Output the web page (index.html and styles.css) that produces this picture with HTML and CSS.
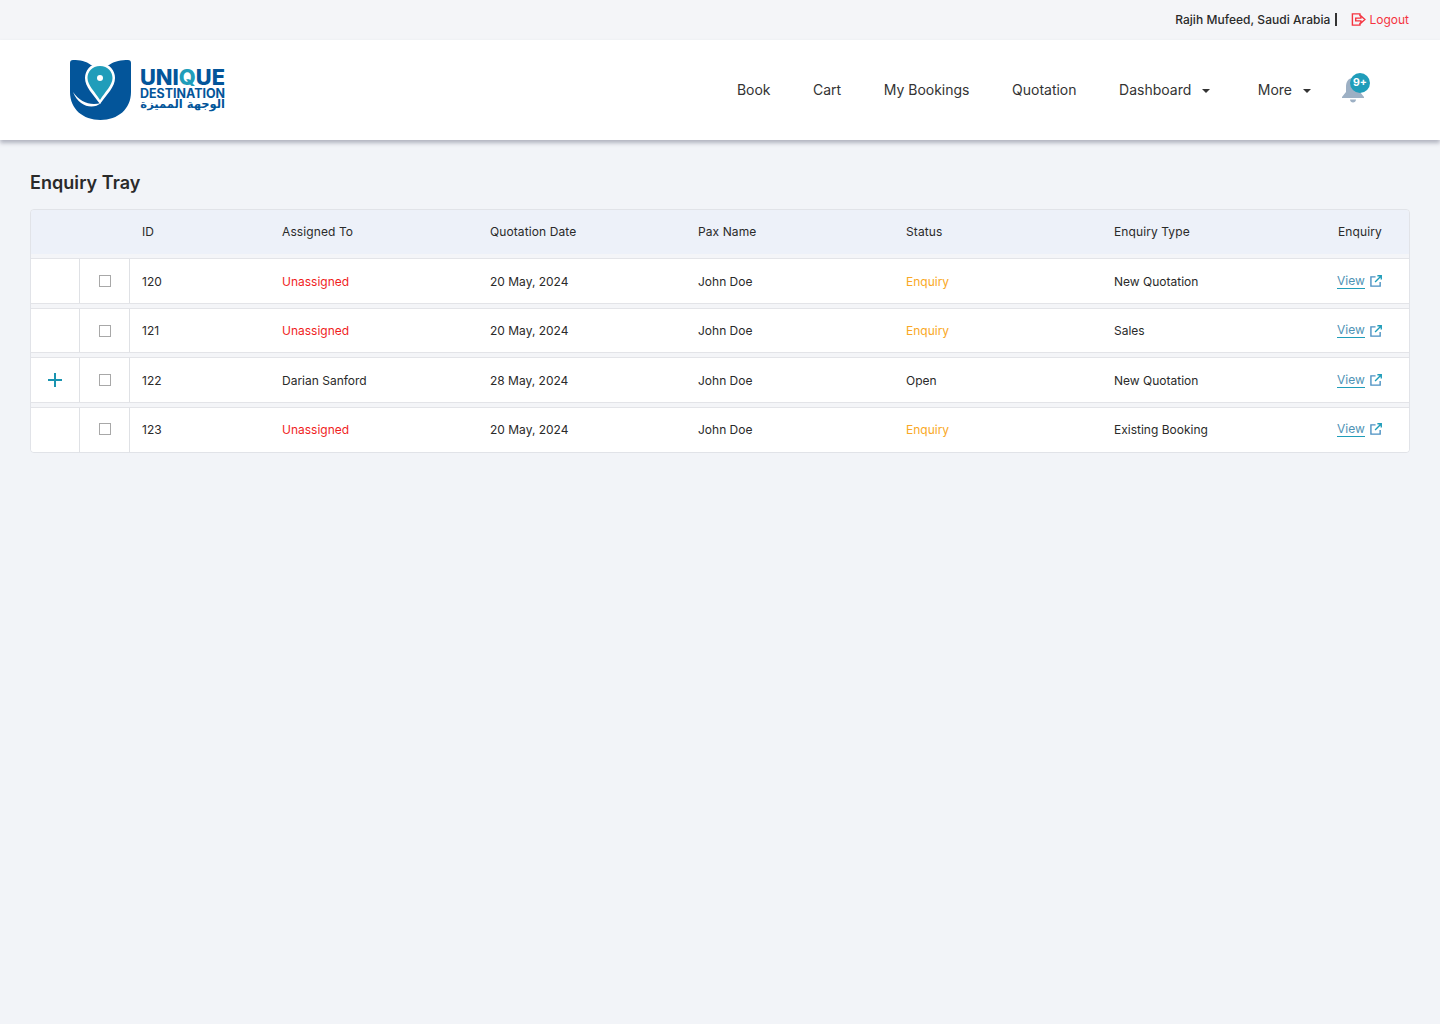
FILE: index.html
```html
<!DOCTYPE html>
<html lang="en">
<head>
<meta charset="UTF-8">
<meta name="viewport" content="width=device-width, initial-scale=1.0">
<title>Enquiry Tray</title>
<link rel="stylesheet" href="styles.css">
</head>
<body>

<!-- top strip -->
<div class="top-bar">
  <span class="user-name">Rajih Mufeed, Saudi Arabia</span>
  <span class="user-sep"></span>
  <a class="logout" href="#">
    <svg class="logout-icon" viewBox="0 0 16 16" width="15" height="15" fill="none" stroke="#f5333f" stroke-width="1.5">
      <path d="M9.500 4.500V2H1.500V14H9.500V11.500"/>
      <path d="M5 6.500H10.500V4L14.800 8L10.500 12V9.500H5Z"/>
    </svg>
    Logout
  </a>
</div>

<!-- header -->
<header class="header">
  <svg class="logo" viewBox="0 0 156 60" width="156" height="60">
    <path d="M3 0C10 0 16 1 21 5H39C44 1 52 0 58 0Q61 0 61 3V32C61 49 48 60 30.500 60C13 60 0 49 0 32V3Q0 0 3 0Z" fill="#03559a"/>
    <path d="M3 32C10 42 20 46 31 43C23 50 9 47 3 32Z" fill="#fff"/>
    <path d="M30 3C40 3 45 11 45 18C45 27 37 34 30 44C23 34 15 27 15 18C15 11 20 3 30 3Z" fill="#fff"/>
    <path d="M30 6C38 6 42.500 12 42.500 18C42.500 25 35 32 30 40C25 32 17.500 25 17.500 18C17.500 12 22 6 30 6Z" fill="#209dba"/>
    <circle cx="30" cy="18" r="3" fill="#fff"/>
    <text class="logo-unique" x="70" y="25" textLength="85" lengthAdjust="spacingAndGlyphs">UNI<tspan class="logo-q">Q</tspan>UE</text>
    <text class="logo-dest" x="70" y="37.500" textLength="85" lengthAdjust="spacingAndGlyphs">DESTINATION</text>
    <text class="logo-ar" x="155" y="48" direction="rtl">الوجهة المميزة</text>
  </svg>
  <nav class="nav">
    <a href="#">Book</a>
    <a href="#">Cart</a>
    <a href="#">My Bookings</a>
    <a href="#">Quotation</a>
    <a href="#" class="has-caret">Dashboard</a>
    <a href="#" class="has-caret">More</a>
    <span class="bell">
      <svg viewBox="0 0 24 26" width="24" height="26" fill="#9db0c4">
        <path d="M11 1C6 1 4 5 4 10V15L0 20V21H22V20L18 15V10C18 5 16 1 11 1Z"/>
        <path d="M8 22.500H14C14 24.500 12.500 25.500 11 25.500C9.500 25.500 8 24.500 8 22.500Z"/>
      </svg>
      <span class="bell-badge">9+</span>
    </span>
  </nav>
</header>

<main class="main">
  <h1 class="page-title">Enquiry Tray</h1>

  <div class="tray">
    <div class="tray-row tray-head">
      <div class="cell"></div>
      <div class="cell"></div>
      <div class="cell">ID</div>
      <div class="cell">Assigned To</div>
      <div class="cell">Quotation Date</div>
      <div class="cell">Pax Name</div>
      <div class="cell">Status</div>
      <div class="cell">Enquiry Type</div>
      <div class="cell cell-last">Enquiry</div>
    </div>

    <div class="tray-row">
      <div class="cell cell-tool"></div>
      <div class="cell cell-tool"><span class="check"></span></div>
      <div class="cell">120</div>
      <div class="cell red">Unassigned</div>
      <div class="cell">20 May, 2024</div>
      <div class="cell">John Doe</div>
      <div class="cell orange">Enquiry</div>
      <div class="cell">New Quotation</div>
      <div class="cell cell-last"><a class="view" href="#">View</a><svg class="ext" viewBox="0 0 13 13" width="12" height="12" fill="none" stroke-width="1.500"><path d="M6 2H1V12H11V7.500" stroke="#4a90c2"/><path d="M5.500 7.500L12 1M8 .800H12.200V5" stroke="#209dba"/></svg></div>
    </div>

    <div class="tray-row">
      <div class="cell cell-tool"></div>
      <div class="cell cell-tool"><span class="check"></span></div>
      <div class="cell">121</div>
      <div class="cell red">Unassigned</div>
      <div class="cell">20 May, 2024</div>
      <div class="cell">John Doe</div>
      <div class="cell orange">Enquiry</div>
      <div class="cell">Sales</div>
      <div class="cell cell-last"><a class="view" href="#">View</a><svg class="ext" viewBox="0 0 13 13" width="12" height="12" fill="none" stroke-width="1.500"><path d="M6 2H1V12H11V7.500" stroke="#4a90c2"/><path d="M5.500 7.500L12 1M8 .800H12.200V5" stroke="#209dba"/></svg></div>
    </div>

    <div class="tray-row">
      <div class="cell cell-tool"><span class="plus"></span></div>
      <div class="cell cell-tool"><span class="check"></span></div>
      <div class="cell">122</div>
      <div class="cell">Darian Sanford</div>
      <div class="cell">28 May, 2024</div>
      <div class="cell">John Doe</div>
      <div class="cell">Open</div>
      <div class="cell">New Quotation</div>
      <div class="cell cell-last"><a class="view" href="#">View</a><svg class="ext" viewBox="0 0 13 13" width="12" height="12" fill="none" stroke-width="1.500"><path d="M6 2H1V12H11V7.500" stroke="#4a90c2"/><path d="M5.500 7.500L12 1M8 .800H12.200V5" stroke="#209dba"/></svg></div>
    </div>

    <div class="tray-row">
      <div class="cell cell-tool"></div>
      <div class="cell cell-tool"><span class="check"></span></div>
      <div class="cell">123</div>
      <div class="cell red">Unassigned</div>
      <div class="cell">20 May, 2024</div>
      <div class="cell">John Doe</div>
      <div class="cell orange">Enquiry</div>
      <div class="cell">Existing Booking</div>
      <div class="cell cell-last"><a class="view" href="#">View</a><svg class="ext" viewBox="0 0 13 13" width="12" height="12" fill="none" stroke-width="1.500"><path d="M6 2H1V12H11V7.500" stroke="#4a90c2"/><path d="M5.500 7.500L12 1M8 .800H12.200V5" stroke="#209dba"/></svg></div>
    </div>
  </div>
</main>

</body>
</html>
```

FILE: styles.css
```css
html, body {
    margin: 0;
    padding: 0;
    min-height: 1024px;
    background-color: #f2f4f8;
    font-family: Inter, "Noto Sans", sans-serif;
    color: #2a2a2a;
}

a {
    color: inherit;
    text-decoration: none;
}

/* top strip */
.top-bar {
    height: 39px;
    padding: 0 31px 1px 0;
    display: flex;
    justify-content: flex-end;
    align-items: center;
    background-color: #f4f5f8;
    font-size: 12px;
}

.user-name {
    font-weight: 500;
    letter-spacing: 0.04px;
}

.user-sep {
    width: 2px;
    height: 13px;
    margin: 0 14px 0 5px;
    background-color: #333;
}

.logout {
    display: flex;
    align-items: center;
    gap: 3px;
    color: #f5333f;
}

/* header */
.header {
    height: 100px;
    display: flex;
    align-items: center;
    justify-content: space-between;
    padding: 0 74px 0 70px;
    background-color: #fff;
    box-shadow: 0 3px 4px rgba(60, 64, 90, 0.35);
}

.logo {
    display: block;
}

.logo text {
    fill: #03559a;
}

.logo .logo-q {
    fill: #209dba;
}

.logo-unique {
    font-size: 21.500px;
    font-weight: 800;
}

.logo-dest {
    font-size: 12.500px;
    font-weight: 700;
}

.logo-ar {
    font-family: "DejaVu Sans", sans-serif;
    font-size: 11.500px;
    font-weight: 700;
}

.nav {
    display: flex;
    align-items: center;
    gap: 42.500px;
    padding-bottom: 2px;
    font-size: 14px;
    color: #333;
}

.has-caret::after {
    content: "";
    display: inline-block;
    margin: 0 5px 0 11px;
    vertical-align: 2px;
    border-top: 4px solid #333;
    border-left: 4px solid transparent;
    border-right: 4px solid transparent;
}

.bell {
    position: relative;
    display: block;
    width: 24px;
    height: 26px;
    margin: 0 0 -2px -16.500px;
}

.bell svg {
    display: block;
}

.bell-badge {
    position: absolute;
    top: -4px;
    left: 8px;
    width: 20px;
    height: 20px;
    border-radius: 50%;
    background-color: #209dba;
    color: #fff;
    font-size: 10.500px;
    font-weight: 700;
    letter-spacing: 0;
    line-height: 20px;
    text-align: center;
}

/* page */
.main {
    padding: 32px 30px 0;
}

.page-title {
    margin: 0 0 15px;
    font-size: 18px;
    line-height: 22px;
    font-weight: 600;
    letter-spacing: 0.05px;
}

.tray {
    border: 1px solid #e1e3e8;
    border-radius: 4px;
    overflow: hidden;
    font-size: 12px;
    background-color: #f4f5f8;
}

.tray-row {
    display: grid;
    grid-template-columns: 49px 50px 140px 208px 208px 208px 208px 208px 1fr;
    height: 43.500px;
    margin-top: 4px;
    background-color: #fff;
    border-top: 1px solid #e3e4e8;
    border-bottom: 1px solid #e3e4e8;
}

.tray-row:last-child {
    height: 44.500px;
    border-bottom: 0;
}

.tray-row:last-child .cell {
    padding-top: 0;
    padding-bottom: 1px;
}

.tray-head {
    height: 44px;
    margin-top: 0;
    border: 0;
    background-color: #edf1f9;
    letter-spacing: 0.1px;
}

.tray-head .cell {
    padding-top: 0;
    padding-bottom: 1px;
}

.cell {
    display: flex;
    align-items: center;
    padding-top: 1px;
    padding-left: 12px;
}

.cell-tool {
    justify-content: center;
    padding-left: 0;
    border-right: 1px solid #dfe1e5;
}

.cell-last {
    padding-left: 28px;
}

.red {
    color: #f01e1e;
}

.orange {
    color: #f9a825;
}

.check {
    width: 10px;
    height: 10px;
    margin-left: 1px;
    border: 1px solid #a8a8a8;
    background-color: #fff;
}

.plus {
    width: 14px;
    height: 14px;
    background:
        linear-gradient(#1a94b0, #1a94b0) center / 14px 2px no-repeat,
        linear-gradient(#1a94b0, #1a94b0) center / 2px 14px no-repeat;
}

.view {
    margin-left: -1px;
    color: #4f93b5;
    border-bottom: 1px solid #209dba;
    line-height: 14px;
}

.ext {
    margin-left: 5px;
}
```
